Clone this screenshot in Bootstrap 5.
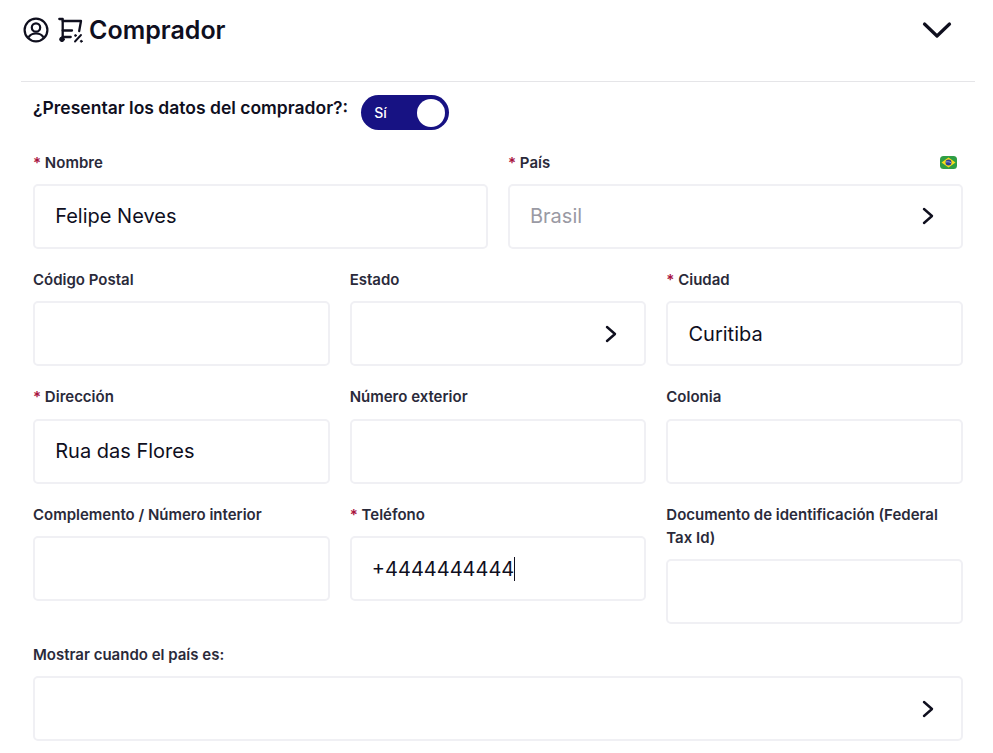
<!doctype html>
<html lang="es"><head><meta charset="utf-8"><title>Comprador</title>
<link href="https://cdn.jsdelivr.net/npm/bootstrap@5.3.0/dist/css/bootstrap.min.css" rel="stylesheet">
<style>
html,body{background:#fff}
body{font-family:Inter,"Liberation Sans",sans-serif;color:#0f0f1e;overflow:hidden}
.shell{width:954px;margin-left:21px;height:753px}
.head-bar{height:61px;padding-left:2px;padding-right:23px;padding-bottom:2px}
.head-title{font-size:25px;font-weight:600;line-height:30px;margin:0 0 0 6px;color:#0f0f1e}
.sep{height:1px;background:#e5e5e8;margin-top:20px}
.inner{padding:0 12px}
.consent{height:57.600px;padding-top:13px}
.consent-label{font-size:17.500px;font-weight:600;line-height:26px;color:#0f0f1e;margin-right:13px}
.sw{width:88px;height:35px;background:#171283;border-radius:18px;color:#fff;font-size:14px;font-weight:500;padding:0 4px 0 13px}
.sw-knob{width:28px;height:28px;background:#fff;border-radius:50%}
.grid-rows{--bs-gutter-x:20px;--bs-gutter-y:0;margin-top:11px}
.fld{margin-bottom:19.100px}
.fld-label{font-size:15px;font-weight:600;line-height:23px;color:#2a2a3a;margin-bottom:10.300px;display:block}
.req{color:#a8123e}
.fld-box{height:65px;border:2px solid #f0f0f4;border-radius:5px;padding:0 20px 0 20.200px;font-size:20px;color:#0f0f1e;background:#fff}
.fld-box.muted-val{color:#9a9aa4;padding-left:20px}
.caret-mark{display:inline-block;width:1px;height:24px;background:#0f0f1e}
.chev{flex:none;margin-right:7px}
.flag{flex:none;margin-right:6px;margin-bottom:10px}
</style></head><body>
<div class="shell">
  <div class="head-bar d-flex align-items-center justify-content-between">
    <div class="d-flex align-items-center">
      <svg width="26" height="26" viewBox="0 0 26 26" fill="none" stroke="#0f0f1e" stroke-width="2.200"><circle cx="13" cy="13" r="11.400"/><circle cx="13" cy="10.500" r="4.200"/><path d="M5.500 20.500c1.500-3 4-4 7.500-4s6 1 7.500 4"/></svg>
      <svg class="ms-2" width="26" height="26" viewBox="0 0 26 26" fill="none" stroke="#0f0f1e" stroke-width="2.300" stroke-linecap="round" stroke-linejoin="round"><path d="M2.300 2h3.400v19"/><path d="M5.700 4h18.300l-1.800 10"/><path d="M5.700 13.500h9.300"/><path d="M5.700 20h8"/><circle cx="5" cy="22.300" r="2.300" fill="#0f0f1e" stroke-width="1"/><path d="M18 24.500l6-6.500" stroke-width="1.900"/><circle cx="18.500" cy="18.500" r="1" fill="#0f0f1e" stroke-width=".8"/><circle cx="24.300" cy="24.300" r="1" fill="#0f0f1e" stroke-width=".8"/></svg>
      <h1 class="head-title">Comprador</h1>
    </div>
    <svg width="30" height="18" viewBox="0 0 30 18" fill="none" stroke="#0f0f1e" stroke-width="3.200" stroke-linecap="round" stroke-linejoin="round"><path d="M2.500 3l12.500 12L27.500 3"/></svg>
  </div>
  <div class="sep"></div>
  <div class="inner">
    <div class="consent d-flex align-items-start">
      <span class="consent-label">¿Presentar los datos del comprador?:</span>
      <div class="sw d-flex align-items-center justify-content-between"><span>Sí</span><span class="sw-knob"></span></div>
    </div>
    <div class="row grid-rows">
      <div class="col-6 fld">
        <label class="fld-label"><span class="req">*</span> Nombre</label>
        <div class="fld-box d-flex align-items-center">Felipe Neves</div>
      </div>
      <div class="col-6 fld">
        <div class="d-flex justify-content-between align-items-center">
          <label class="fld-label"><span class="req">*</span> País</label>
          <svg class="flag" width="17" height="13" viewBox="0 0 17 13"><rect width="17" height="13" rx="3.500" fill="#2f9e44"/><path d="M8.500 1.500L15.500 6.500 8.500 11.500 1.500 6.500z" fill="#f7dc1c"/><circle cx="8.500" cy="6.500" r="3" fill="#2b3f99"/><path d="M5.800 6c2-.5 3.800-.2 5.400.9" stroke="#dfe3f2" stroke-width=".6" fill="none"/></svg>
        </div>
        <div class="fld-box muted-val d-flex align-items-center justify-content-between">Brasil
          <svg class="chev" width="12" height="18" viewBox="0 0 12 18" fill="none" stroke="#0f0f1e" stroke-width="2.400" stroke-linecap="round" stroke-linejoin="round"><path d="M2 2l8 7-8 7"/></svg>
        </div>
      </div>
      <div class="col-4 fld">
        <label class="fld-label">Código Postal</label>
        <div class="fld-box"></div>
      </div>
      <div class="col-4 fld">
        <label class="fld-label">Estado</label>
        <div class="fld-box d-flex align-items-center justify-content-end">
          <svg class="chev" width="12" height="18" viewBox="0 0 12 18" fill="none" stroke="#0f0f1e" stroke-width="2.400" stroke-linecap="round" stroke-linejoin="round"><path d="M2 2l8 7-8 7"/></svg>
        </div>
      </div>
      <div class="col-4 fld">
        <label class="fld-label"><span class="req">*</span> Ciudad</label>
        <div class="fld-box d-flex align-items-center">Curitiba</div>
      </div>
      <div class="col-4 fld">
        <label class="fld-label"><span class="req">*</span> Dirección</label>
        <div class="fld-box d-flex align-items-center">Rua das Flores</div>
      </div>
      <div class="col-4 fld">
        <label class="fld-label">Número exterior</label>
        <div class="fld-box"></div>
      </div>
      <div class="col-4 fld">
        <label class="fld-label">Colonia</label>
        <div class="fld-box"></div>
      </div>
      <div class="col-4 fld">
        <label class="fld-label">Complemento / Número interior</label>
        <div class="fld-box"></div>
      </div>
      <div class="col-4 fld">
        <label class="fld-label"><span class="req">*</span> Teléfono</label>
        <div class="fld-box d-flex align-items-center">+4444444444<span class="caret-mark"></span></div>
      </div>
      <div class="col-4 fld">
        <label class="fld-label">Documento de identificación (Federal Tax Id)</label>
        <div class="fld-box"></div>
      </div>
      <div class="col-12 fld">
        <label class="fld-label">Mostrar cuando el país es:</label>
        <div class="fld-box d-flex align-items-center justify-content-end">
          <svg class="chev" width="12" height="18" viewBox="0 0 12 18" fill="none" stroke="#0f0f1e" stroke-width="2.400" stroke-linecap="round" stroke-linejoin="round"><path d="M2 2l8 7-8 7"/></svg>
        </div>
      </div>
    </div>
  </div>
</div>
</body></html>
